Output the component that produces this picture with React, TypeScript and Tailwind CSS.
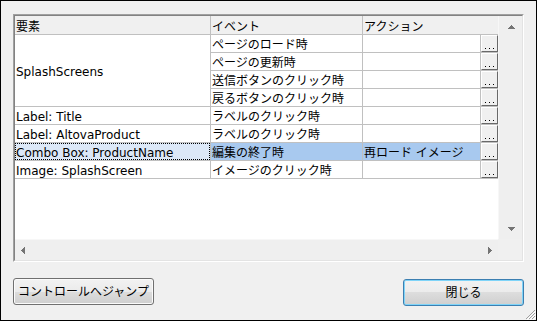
import React from "react"

interface EventRow {
    event: string
    action?: string
    selected?: boolean
}

const splashRows: EventRow[] = [
    { event: "ページのロード時" },
    { event: "ページの更新時" },
    { event: "送信ボタンのクリック時" },
    { event: "戻るボタンのクリック時" },
]

const otherRows: (EventRow & { element: string })[] = [
    { element: "Label: Title", event: "ラベルのクリック時" },
    { element: "Label: AltovaProduct", event: "ラベルのクリック時" },
    { element: "Combo Box: ProductName", event: "編集の終了時", action: "再ロード イメージ", selected: true },
    { element: "Image: SplashScreen", event: "イメージのクリック時" },
]

// small pixel triangles for the scroll bars
const Arrow = ({ dir }: { dir: "up" | "down" | "left" | "right" }) => {
    const rects = [0, 1, 2, 3].map(i => {
        const len = 2 * i + 1
        if (dir === "up") return <rect key={i} x={3 - i} y={i} width={len} height={1} />
        if (dir === "down") return <rect key={i} x={3 - i} y={3 - i} width={len} height={1} />
        if (dir === "left") return <rect key={i} x={i} y={3 - i} width={1} height={len} />
        return <rect key={i} x={3 - i} y={3 - i} width={1} height={len} />
    })
    const vertical = dir === "up" || dir === "down"
    return (
        <svg width={vertical ? 7 : 4} height={vertical ? 4 : 7} fill="#747474" shapeRendering="crispEdges">
            {rects}
        </svg>
    )
}

const DotsButton = () => (
    <div className="border-b border-[#c0c0c0] flex">
        <div className="w-[17px] h-[17px] bg-[#f0f0f0] border-t border-l border-t-white border-l-white border-r border-b border-r-[#696969] border-b-[#696969] flex items-end justify-center pb-[2px] gap-[3px]">
            <span className="w-px h-px bg-black" />
            <span className="w-px h-px bg-black" />
            <span className="w-px h-px bg-black" />
        </div>
    </div>
)

const EventCells = ({ row }: { row: EventRow }) => (
    <>
        <div className={`border-r border-b border-[#c0c0c0] flex items-center pl-px pt-[3px] whitespace-nowrap ${row.selected ? "bg-[#a8c9ef]" : ""}`}>
            {row.event}
        </div>
        <div className={`border-r border-b border-[#c0c0c0] flex items-center pl-px pt-[3px] whitespace-nowrap ${row.selected ? "bg-[#a8c9ef]" : ""}`}>
            {row.action}
        </div>
        <DotsButton />
    </>
)

const App: React.FC = () => {
    return (
        <div className="relative w-[537px] h-[321px] bg-[#f0f0f0] border border-black font-['DejaVu_Sans','Noto_Sans_CJK_JP',sans-serif] text-[12px] text-black leading-[17px] flex flex-col">
            {/* list box */}
            <div className="ml-[12px] mt-[13px] w-[511px] h-[248px] border border-t-[#a0a0a0] border-l-[#a0a0a0] border-b-white border-r-white">
                <div className="w-full h-full border border-t-[#828282] border-l-[#828282] border-b-[#e3e3e3] border-r-[#e3e3e3] flex flex-col">
                    <div className="flex h-[223px]">
                        <div className="w-[483px] bg-white flex flex-col">
                            <div className="grid grid-cols-[196px_152px_1fr] h-[19px] bg-[#f0f0f0] border-b border-[#c0c0c0]">
                                <div className="border-r border-[#c0c0c0] pl-px pt-[3px] flex items-center">要素</div>
                                <div className="border-r border-[#c0c0c0] pl-px pt-[3px] flex items-center">イベント</div>
                                <div className="pl-px pt-[3px] flex items-center">アクション</div>
                            </div>
                            <div className="grid grid-cols-[196px_152px_118px_17px] auto-rows-[18px]">
                                <div className="row-span-4 border-r border-b border-[#c0c0c0] flex items-center pl-px pt-[3px]">SplashScreens</div>
                                {splashRows.map((row, i) => (
                                    <EventCells key={i} row={row} />
                                ))}
                                {otherRows.map((row, i) => (
                                    <React.Fragment key={i}>
                                        {row.selected ? (
                                            <div className="border-r border-b border-[#c0c0c0] flex">
                                                <div className="flex-1 border border-dotted border-black bg-[#dce8f7] flex items-center pt-[3px] whitespace-nowrap">
                                                    {row.element}
                                                </div>
                                            </div>
                                        ) : (
                                            <div className="border-r border-b border-[#c0c0c0] flex items-center pl-px pt-[3px] whitespace-nowrap">
                                                {row.element}
                                            </div>
                                        )}
                                        <EventCells row={row} />
                                    </React.Fragment>
                                ))}
                            </div>
                        </div>
                        {/* vertical scroll bar */}
                        <div className="w-[24px] bg-[#efefef] border-l border-[#f7f7f7] flex flex-col justify-between">
                            <div className="h-[21px] flex items-center justify-center pl-[2px]">
                                <Arrow dir="up" />
                            </div>
                            <div className="h-[21px] flex items-center justify-center pl-[2px]">
                                <Arrow dir="down" />
                            </div>
                        </div>
                    </div>
                    <div className="flex h-[21px]">
                        {/* horizontal scroll bar */}
                        <div className="w-[483px] bg-[#efefef] border-t border-[#f7f7f7] flex items-center justify-between pl-[6px] pr-[6px]">
                            <Arrow dir="left" />
                            <Arrow dir="right" />
                        </div>
                        <div className="flex-1 bg-[#f0f0f0]" />
                    </div>
                </div>
            </div>

            {/* buttons */}
            <div className="flex justify-between ml-[12px] mr-[12px] mt-[16px]">
                <button className="w-[141px] h-[27px] rounded-[3px] border border-[#707070] bg-[linear-gradient(#f2f2f2_0%,#ebebeb_50%,#dddddd_50%,#cfcfcf_100%)] shadow-[inset_0_0_0_1px_#fbfbfb] flex items-center justify-center pt-[2px]">
                    コントロールへジャンプ
                </button>
                <button className="w-[121px] h-[27px] mt-px rounded-[3px] border border-[#3c7fb1] bg-[linear-gradient(#f2f2f2_0%,#ebebeb_50%,#dddddd_50%,#cfcfcf_100%)] shadow-[inset_0_0_0_1px_#7fd4f8] flex items-center justify-center pt-[2px]">
                    閉じる
                </button>
            </div>

            {/* resize grip */}
            <svg className="absolute right-0 bottom-0" width="13" height="13" viewBox="0 0 13 13">
                <path d="M12 3 L3 12 M12 6 L6 12 M12 9 L9 12" stroke="#a0a0a0" strokeWidth="1" />
                <path d="M13 4 L4 13 M13 7 L7 13 M13 10 L10 13" stroke="#ffffff" strokeWidth="1" />
            </svg>
        </div>
    )
}

export default App
